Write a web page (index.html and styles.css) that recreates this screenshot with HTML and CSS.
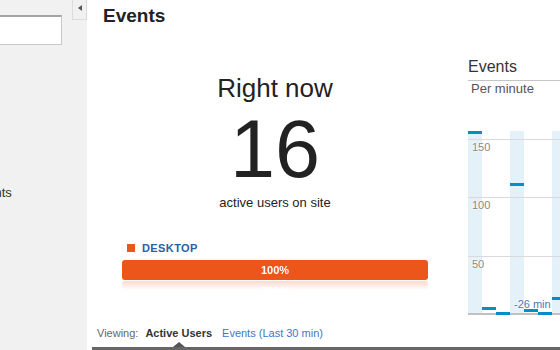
FILE: index.html
```html
<!DOCTYPE html>
<html>
<head>
<meta charset="utf-8">
<link rel="stylesheet" href="styles.css">
</head>
<body>
<div class="app">
  <aside class="sidebar">
    <div class="side-top">
      <input class="search" type="text">
      <div class="collapse"><span class="tri-left"></span></div>
    </div>
    <div class="side-item">Events</div>
  </aside>
  <main class="main">
    <h1 class="title">Events</h1>
    <div class="content">
      <section class="now">
        <div class="now-label">Right now</div>
        <div class="now-count">16</div>
        <div class="now-sub">active users on site</div>
        <div class="legend"><span class="swatch"></span>DESKTOP</div>
        <div class="bar">100%</div>
      </section>
      <section class="chart">
        <div class="chart-title">Events</div>
        <div class="chart-sub">Per minute</div>
        <div class="plot">
          <div class="col hl"><div class="cap" style="height:182px"></div></div>
          <div class="col"><div class="cap" style="height:6px"></div></div>
          <div class="col"><div class="cap" style="height:1px"></div></div>
          <div class="col hl"><div class="cap" style="height:130px"></div></div>
          <div class="col"><div class="cap" style="height:4px"></div></div>
          <div class="col"><div class="cap" style="height:1px"></div></div>
          <div class="col hl"><div class="cap" style="height:16px"></div></div>
          <div class="col"><div class="cap" style="height:20px"></div></div>
          <div class="grid g150"></div>
          <div class="grid g100"></div>
          <div class="grid g50"></div>
          <span class="ylabel l150">150</span>
          <span class="ylabel l100">100</span>
          <span class="ylabel l50">50</span>
          <span class="xlabel">-26 min</span>
        </div>
      </section>
    </div>
    <div class="footer">
      <span class="viewing">Viewing:</span>
      <span class="tab active">Active Users</span>
      <span class="tab link">Events (Last 30 min)</span>
    </div>
  </main>
</div>
</body>
</html>
```
FILE: styles.css
```css
* { box-sizing: border-box; }
html, body { margin: 0; padding: 0; }
body {
  width: 560px;
  height: 350px;
  overflow: hidden;
  font-family: "Liberation Sans", Arial, sans-serif;
  color: #333;
  background: #fff;
}
.app { display: flex; height: 350px; }

.sidebar {
  width: 87px;
  flex: none;
  background: #f1f1f1;
  overflow: hidden;
  display: flex;
  flex-direction: column;
}
.side-top { display: flex; align-items: flex-start; height: 45px; }
.search {
  width: 100px;
  height: 30px;
  margin: 15px 0 0 -38px;
  padding: 0;
  border: 1px solid #c8c8c8;
  border-top: 2px solid #a4a4a4;
  background: #fff;
  flex: none;
}
.collapse {
  width: 15px;
  height: 21px;
  margin: -1px 0 0 10px;
  border: 1px solid #dcdcdc;
  background: #f1f1f1;
  display: flex;
  align-items: center;
  justify-content: center;
  flex: none;
}
.tri-left {
  width: 0; height: 0;
  border-top: 3px solid transparent;
  border-bottom: 3px solid transparent;
  border-right: 4px solid #555;
  margin-top: -4px;
}
.side-item {
  margin: 140px 0 0 -28px;
  font-size: 13px;
  line-height: 16px;
  color: #333;
  white-space: nowrap;
}

.main {
  flex: 1;
  min-width: 0;
  display: flex;
  flex-direction: column;
  overflow: hidden;
}
.title {
  margin: 0;
  padding: 4px 0 0 16px;
  height: 28px;
  font-size: 19px;
  line-height: 24px;
  font-weight: bold;
  color: #222;
}
.content { flex: 1; display: flex; min-height: 0; }

.now {
  width: 376px;
  flex: none;
  padding-top: 45px;
  text-align: center;
}
.now-label { font-size: 26px; line-height: 30px; color: #222; }
.now-count { font-size: 81px; line-height: 82px; margin-top: 5px; color: #222; }
.now-sub { font-size: 13px; line-height: 16px; margin-top: 5px; color: #222; }
.legend {
  margin-top: 30px;
  padding-left: 40px;
  text-align: left;
  font-size: 11px;
  line-height: 14px;
  font-weight: bold;
  letter-spacing: 0.4px;
  color: #2a5da6;
  display: flex;
  align-items: center;
}
.swatch {
  width: 8px; height: 8px;
  background: #ed561b;
  margin-right: 7px;
}
.bar {
  margin: 5px 35px 0;
  height: 20px;
  border-radius: 3px;
  background: #ed561b;
  color: #fff;
  font-size: 11px;
  font-weight: bold;
  line-height: 20px;
  -webkit-box-reflect: below 1px linear-gradient(transparent 55%, rgba(255,255,255,0.22));
}

.chart {
  flex: none;
  width: 120px;
  margin-left: 5px;
  padding-top: 29px;
}
.chart-title {
  font-size: 16px;
  line-height: 20px;
  padding-bottom: 3px;
  border-bottom: 1px solid #c4c4c4;
  color: #333;
}
.chart-sub {
  font-size: 13px;
  line-height: 16px;
  margin-left: 3px;
  color: #555;
}
.plot {
  position: relative;
  margin-top: 34px;
  height: 184px;
  border-bottom: 2px solid #c0c0c0;
  display: flex;
}
.col {
  width: 14px;
  flex: none;
  display: flex;
  flex-direction: column;
  justify-content: flex-end;
}
.col.hl { background: #e4f1f8; }
.cap { position: relative; }
.cap::before {
  content: "";
  position: absolute;
  left: 0; right: 0; top: 0;
  height: 3px;
  background: #058dc7;
}
.grid {
  position: absolute;
  left: 0; right: 0;
  height: 1px;
  background: #dadada;
}
.g150 { top: 8px; }
.g100 { top: 66px; }
.g50 { top: 125px; }
.ylabel {
  position: absolute;
  left: 4px;
  font-size: 11px;
  line-height: 13px;
  color: #888;
  text-shadow: 0 0 2px #fff, 0 0 2px #fff, 0 0 2px #fff;
}
.l150 { top: 10px; }
.l100 { top: 68px; }
.l50 { top: 127px; }
.xlabel {
  position: absolute;
  left: 46px;
  top: 167px;
  font-size: 11px;
  line-height: 13px;
  color: #4a78b8;
  white-space: nowrap;
  text-shadow: 0 0 2px #fff, 0 0 2px #fff, 0 0 2px #fff;
}

.footer {
  height: 24px;
  margin-left: 5px;
  padding: 0 0 7px 5px;
  border-bottom: 3px solid #666;
  font-size: 11px;
  line-height: 14px;
  display: flex;
  align-items: flex-start;
  white-space: nowrap;
}
.viewing { color: #666; margin-right: 7px; }
.tab { margin-right: 10px; }
.tab.active {
  position: relative;
  font-weight: bold;
  color: #333;
}
.tab.active::after {
  content: "";
  position: absolute;
  left: 50%;
  bottom: -7px;
  margin-left: -6px;
  border-left: 6px solid transparent;
  border-right: 6px solid transparent;
  border-bottom: 5px solid #555;
}
.tab.link { color: #3b78c9; }
```
